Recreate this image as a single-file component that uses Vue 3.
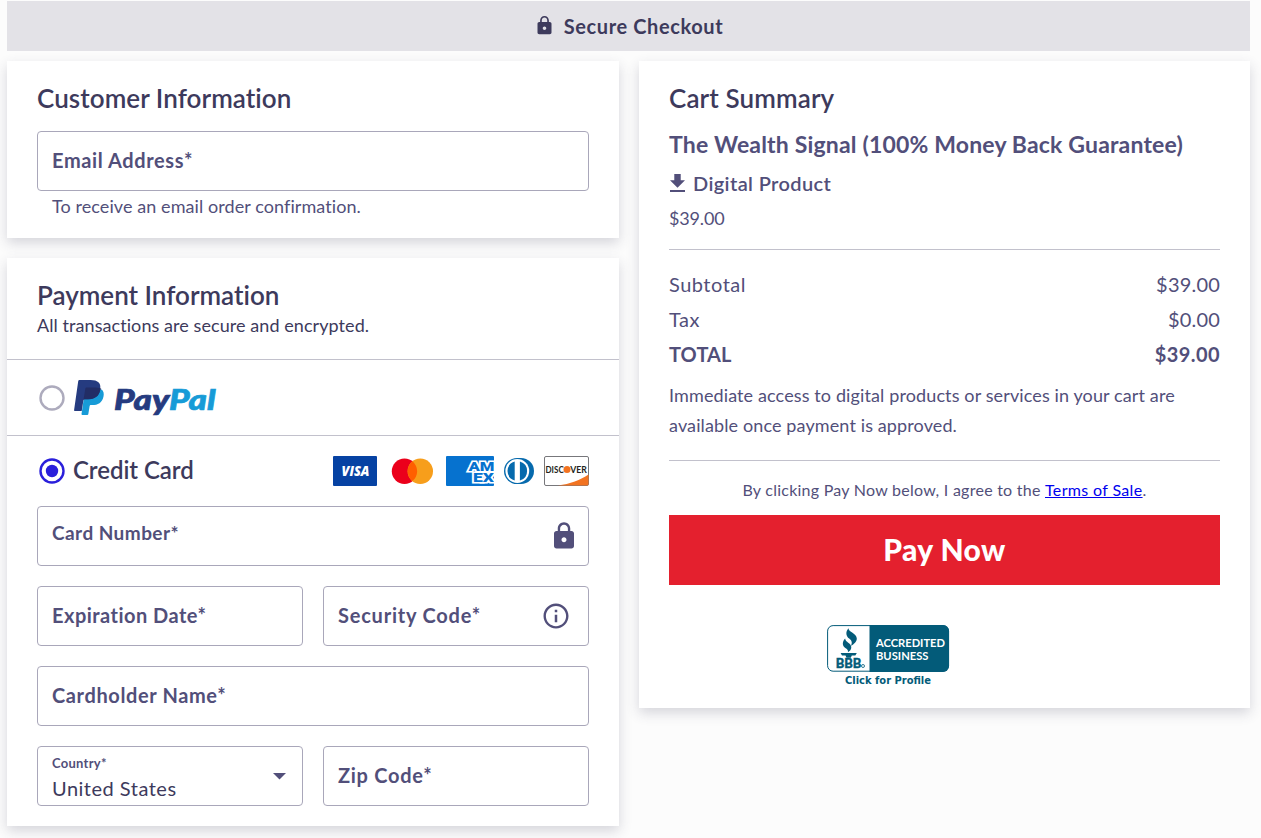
<script setup>
const totals = [
  { label: 'Subtotal', value: '$39.00' },
  { label: 'Tax', value: '$0.00' },
  { label: 'TOTAL', value: '$39.00', strong: true },
]
const lockPath = 'M18 8h-1V6c0-2.76-2.24-5-5-5S7 3.24 7 6v2H6c-1.1 0-2 .9-2 2v10c0 1.1.9 2 2 2h12c1.1 0 2-.9 2-2V10c0-1.1-.9-2-2-2zm-6 9c-1.1 0-2-.9-2-2s.9-2 2-2 2 .9 2 2-.9 2-2 2zm3.1-9H8.9V6c0-1.71 1.39-3.1 3.1-3.1 1.71 0 3.1 1.39 3.1 3.1v2z'
</script>

<template>
  <div class="page">
    <header class="banner">
      <svg class="banner-lock" viewBox="0 0 24 24"><path :d="lockPath" fill="currentColor" /></svg>
      <span>Secure Checkout</span>
    </header>

    <main class="columns">
      <div class="column">
        <section class="card customer">
          <h2 class="title t-customer">Customer Information</h2>
          <div class="field"><label class="t-email">Email Address*</label></div>
          <p class="hint">To receive an email order confirmation.</p>
        </section>

        <section class="card">
          <div class="pay-head">
            <h2 class="title t-payment">Payment Information</h2>
            <p class="sub">All transactions are secure and encrypted.</p>
          </div>

          <div class="method paypal">
            <svg class="radio" width="26" height="26" viewBox="0 0 26 26"><circle cx="13" cy="13" r="11.500" fill="none" stroke="#adabbd" stroke-width="2.400" /></svg>
            <svg class="paypal-logo" width="144" height="38" viewBox="0 0 144 38">
              <path fill="#179bd7" d="M27.8 10.5c1.8 1.7 2.3 4 1.7 7-1.3 6.3-5.6 8.6-11.3 8.6h-1.3c-.7 0-1.2.5-1.3 1.1L14.3 35.200c-.1.5-.5.8-1 .8H8.200c-.5 0-.8-.4-.7-.9L10.800 13z" />
              <path fill="#253b80" d="M26.2 9.900c.4-2.700 0-4.600-1.500-6.300C23.100 1.700 20.100 1 16.400 1H5.700c-.8 0-1.400.5-1.500 1.300L.1 31.100c-.1.600.3 1 .9 1h6.700l1.700-10.600c.1-.8.8-1.300 1.500-1.300h3.100c6.200 0 11-2.500 12.200-10.300z" />
              <path fill="#222d65" d="M27.300 9.700c-2.200-1-5-1.100-8.300-1.100h-6.300c-.8 0-1.300.4-1.400 1.100L9.400 21.500c.1-.8.8-1.300 1.500-1.300H14c6.200 0 11-2.500 12.200-8.900z" />
              <text class="paypal-word" x="40" y="30.500" textLength="101.500" lengthAdjust="spacingAndGlyphs"><tspan fill="#253b80" stroke="#253b80">Pay</tspan><tspan fill="#179bd7" stroke="#179bd7">Pal</tspan></text>
            </svg>
          </div>

          <div class="method credit">
            <svg class="radio" width="26" height="26" viewBox="0 0 26 26">
              <circle cx="13" cy="13" r="11.500" fill="none" stroke="#2a1fdb" stroke-width="2.400" />
              <circle cx="13" cy="13" r="6.200" fill="#2a1fdb" />
            </svg>
            <span class="credit-label">Credit Card</span>
            <div class="brands">
              <svg width="44" height="30" viewBox="0 0 44 30">
                <rect width="44" height="30" rx="1" fill="#0642a3" />
                <text class="visa" x="8.500" y="19.700" textLength="28" lengthAdjust="spacingAndGlyphs">VISA</text>
              </svg>
              <svg width="49" height="30" viewBox="0 0 49 30">
                <circle cx="17.500" cy="15.200" r="12.700" fill="#eb001b" />
                <circle cx="33.300" cy="15.200" r="12.700" fill="#f79e1b" />
                <path d="M25.400 5.300a12.700 12.700 0 0 1 0 19.800a12.700 12.700 0 0 1 0-19.800z" fill="#ff5f00" />
              </svg>
              <svg width="48" height="30" viewBox="0 0 48 30">
                <rect width="48" height="30" rx="1" fill="#0672cf" />
                <text class="amex" x="22.500" y="14.600" textLength="26" lengthAdjust="spacingAndGlyphs">AM</text>
                <text class="amex" x="27" y="26.300" textLength="21" lengthAdjust="spacingAndGlyphs">EX</text>
              </svg>
              <svg width="30" height="30" viewBox="0 0 30 30">
                <path d="M13 2h4a13 13 0 0 1 0 26h-4a13 13 0 0 1 0-26z" fill="#066aad" />
                <circle cx="13.300" cy="15" r="11.900" fill="#fff" />
                <path d="M10.700 5.400a10 10 0 0 0 0 19.200zM15.900 5.400a10 10 0 0 1 0 19.200z" fill="#066aad" />
              </svg>
              <svg width="45" height="30" viewBox="0 0 45 30">
                <rect x=".5" y=".5" width="44" height="29" rx="1.500" fill="#fff" stroke="#77777b" />
                <path d="M44.500 18.500v9.500a1.500 1.500 0 0 1-1.500 1.500H14c12-1.500 22.500-5.500 30.500-11z" fill="#f27321" />
                <text class="discover" x="1.500" y="16.900" textLength="18.200" lengthAdjust="spacingAndGlyphs">DISC</text>
                <circle cx="23" cy="13.500" r="3.500" fill="#f27321" />
                <text class="discover" x="26.200" y="16.900" textLength="16.600" lengthAdjust="spacingAndGlyphs">VER</text>
              </svg>
            </div>
          </div>

          <div class="form">
            <div class="field wide number">
              <label class="t-number">Card Number*</label>
              <svg class="field-icon" viewBox="0 0 24 24"><path :d="lockPath" fill="currentColor" /></svg>
            </div>
            <div class="field"><label class="t-exp">Expiration Date*</label></div>
            <div class="field cvv">
              <label class="t-code">Security Code*</label>
              <svg class="field-icon" viewBox="0 0 24 24"><path fill="currentColor" d="M11 17h2v-6h-2v6zm1-15C6.480 2 2 6.480 2 12s4.480 10 10 10 10-4.480 10-10S17.520 2 12 2zm0 18.100c-4.470 0-8.100-3.630-8.100-8.100S7.530 3.900 12 3.900s8.100 3.630 8.100 8.100-3.630 8.100-8.100 8.100zM11 9h2V7h-2v2z" /></svg>
            </div>
            <div class="field wide"><label class="t-name">Cardholder Name*</label></div>
            <div class="field select">
              <div>
                <small>Country*</small>
                <span>United States</span>
              </div>
              <svg class="caret" width="13" height="7" viewBox="0 0 13 7"><path d="M0 0h13L6.500 6.500z" fill="currentColor" /></svg>
            </div>
            <div class="field"><label class="t-zip">Zip Code*</label></div>
          </div>
        </section>
      </div>

      <section class="card cart">
        <h2 class="title t-cart">Cart Summary</h2>
        <h3 class="product">The Wealth Signal (100% Money Back Guarantee)</h3>
        <div class="digital">
          <svg width="15" height="18" viewBox="5 3 14 17" preserveAspectRatio="none"><path d="M19 9h-4V3H9v6H5l7 7 7-7zM5 18v2h14v-2H5z" fill="currentColor" /></svg>
          <span>Digital Product</span>
        </div>
        <div class="price">$39.00</div>
        <div class="totals">
          <div v-for="row in totals" :key="row.label" class="total-row" :class="{ strong: row.strong }">
            <span>{{ row.label }}</span><span class="amount">{{ row.value }}</span>
          </div>
        </div>
        <p class="note">Immediate access to digital products or services in your cart are available once payment is approved.</p>
        <p class="terms">By clicking Pay Now below, I agree to the <a href="#">Terms of Sale</a>.</p>
        <button class="pay" type="button">Pay Now</button>
        <svg class="bbb" width="124" height="64" viewBox="0 0 124 64">
          <rect x=".600" y=".600" width="121" height="45.600" rx="5.500" fill="#fff" stroke="#035b79" stroke-width="1" />
          <path d="M42.500 0H116a6 6 0 0 1 6 6v35a6 6 0 0 1-6 6H42.500z" fill="#035b79" />
          <path fill="#035b79" d="M21.500 3.200c-.3 3.600 8.300 5.100 8.300 10.200 0 3.400-2.700 5.500-5.800 7.400 1.700-3.500.4-5.500-1.800-7.200-3.200-2.400-4-6.700-.7-10.400zM18.100 13.500c.3 3.800 6 4.600 6.200 8.600.1 2.600-1.500 4.100-3.400 5.200.5-2-.5-2.900-2.200-4-3.800-2.400-3.600-6.500-.6-9.800zM13.600 28h16.200l-1.500 2.400h-3.500l-1 2.300h-4.300l-1-2.300h-3.500z" />
          <text class="bbb-name" x="8.800" y="42.600" textLength="25.500" lengthAdjust="spacingAndGlyphs">BBB</text>
          <circle cx="36" cy="41" r="1.500" fill="none" stroke="#035b79" stroke-width=".800" />
          <text class="bbb-tag" x="49" y="22.300" textLength="69" lengthAdjust="spacingAndGlyphs">ACCREDITED</text>
          <text class="bbb-tag" x="49" y="34.900" textLength="52.500" lengthAdjust="spacingAndGlyphs">BUSINESS</text>
          <text class="bbb-link" x="18" y="59.300" textLength="86" lengthAdjust="spacingAndGlyphs">Click for Profile</text>
        </svg>
      </section>
    </main>
  </div>
</template>

<style>
body { margin: 0; background: #fcfcfc; overflow: hidden; }
</style>

<style scoped>
.page {
  box-sizing: border-box;
  height: 838px;
  padding: 1px 11px 0 7px;
  overflow: hidden;
  font-family: Lato, "Open Sans", sans-serif;
  font-variant-ligatures: none;
  color: #524f7a;
}
h2, h3, p { margin: 0; }
svg { display: block; flex: none; }

.banner {
  height: 50px;
  display: flex;
  align-items: center;
  justify-content: center;
  gap: 9px;
  background: #e3e2e7;
  color: #3d3a5c;
  font-size: 20px;
  font-weight: 700;
  letter-spacing: .6px;
}
.banner-lock { width: 21px; height: 21px; margin-bottom: 1px; }

.columns { display: flex; gap: 20px; align-items: flex-start; margin-top: 10px; }
.column { width: 612px; display: flex; flex-direction: column; gap: 20px; flex: none; }
.card {
  box-sizing: border-box;
  background: #fff;
  box-shadow: 0 5px 12px rgba(61, 58, 92, .2);
}
.customer { height: 177px; padding: 21px 30px 0; }
.title {
  font-size: 26px;
  line-height: 32px;
  font-weight: 600;
  color: #3d3a5c;
}
.t-customer { letter-spacing: .07px; }
.t-payment { letter-spacing: 0; }
.t-cart { letter-spacing: .12px; }

.field {
  box-sizing: border-box;
  height: 60px;
  border: 1px solid #a9a7ba;
  border-radius: 4px;
  padding: 0 14px 3px;
  display: flex;
  align-items: center;
  justify-content: space-between;
}
.field label { font-size: 20px; font-weight: 700; white-space: nowrap; }
.customer .field { margin-top: 17px; }
.t-email { letter-spacing: .6px; }
.field .t-number { font-size: 19px; letter-spacing: .45px; padding-bottom: 8px; }
.t-exp { letter-spacing: .47px; }
.t-code { letter-spacing: .78px; }
.t-name { letter-spacing: .62px; }
.t-zip { letter-spacing: .72px; }
.hint {
  margin: 3px 0 0 15px;
  font-size: 18px;
  line-height: 24px;
  letter-spacing: .08px;
}

.pay-head { height: 101px; box-sizing: border-box; padding: 21px 30px 0; }
.sub { margin-top: 2px; font-size: 18px; line-height: 24px; color: #3d3a5c; letter-spacing: .07px; }
.method {
  display: flex;
  align-items: center;
  border-top: 1px solid #c2c1cc;
  padding: 0 30px 0 32px;
}
.paypal { height: 75px; }
.credit { height: 70px; }
.paypal-logo { margin-left: 9px; }
.paypal-word { font: italic 900 29px Lato, sans-serif; stroke-width: .700px; }
.credit-label {
  margin-left: 8px;
  padding-bottom: 3px;
  font-size: 24px;
  font-weight: 600;
  letter-spacing: -.05px;
  color: #3d3a5c;
}
.brands { display: flex; gap: 10px; margin-left: auto; }
.visa { font: italic 800 13.500px "Open Sans", sans-serif; fill: #fff; }
.amex { font: 900 13px Roboto, sans-serif; fill: #0672cf; stroke: #fff; stroke-width: 3px; paint-order: stroke; }
.discover { font: 700 9.500px Lato, sans-serif; fill: #231f20; }

.form {
  display: grid;
  grid-template-columns: 266px 266px;
  gap: 20px;
  padding: 0 30px 20px;
}
.wide { grid-column: span 2; }
.field-icon { width: 30px; height: 30px; }
.number { padding: 0 9px 0 14px; }
.cvv { padding-right: 17px; }
.cvv .field-icon { margin-top: 3px; }
.select { padding: 2px 16px 0 14px; }
.select small {
  display: block;
  padding-top: 1px;
  font-size: 13px;
  line-height: 16px;
  font-weight: 700;
  letter-spacing: .28px;
}
.select span {
  display: block;
  margin-top: 5px;
  font-size: 20px;
  line-height: 24px;
  letter-spacing: .5px;
  color: #3d3a5c;
}
.caret { margin-bottom: 2px; }

.cart { width: 611px; height: 647px; padding: 21px 30px 0; }
.product {
  margin-top: 16px;
  font-size: 23px;
  line-height: 28px;
  font-weight: 700;
  letter-spacing: .17px;
  white-space: nowrap;
}
.digital {
  display: flex;
  align-items: center;
  gap: 8px;
  height: 24px;
  margin: 13px 0 0 1px;
  font-size: 20px;
  font-weight: 600;
  line-height: 24px;
  letter-spacing: .38px;
}
.price { margin-top: 11px; font-size: 18px; line-height: 24px; letter-spacing: -.15px; }
.totals { margin-top: 19px; border-top: 1px solid #c2c1cc; padding-top: 17px; }
.total-row {
  display: flex;
  justify-content: space-between;
  font-size: 20px;
  line-height: 35px;
  letter-spacing: .5px;
}
.total-row .amount { letter-spacing: .2px; }
.total-row.strong { font-weight: 700; letter-spacing: .1px; }
.total-row.strong .amount { letter-spacing: .4px; }
.note { margin-top: 8px; font-size: 18px; line-height: 30px; letter-spacing: .12px; }
.terms {
  margin-top: 20px;
  border-top: 1px solid #c2c1cc;
  padding-top: 17px;
  font-size: 16px;
  line-height: 24px;
  letter-spacing: .25px;
  text-align: center;
}
.terms a { color: #0000ee; letter-spacing: .35px; }
.pay {
  display: block;
  width: 100%;
  height: 70px;
  margin-top: 13px;
  border: 0;
  padding: 0 0 2px;
  background: #e4202e;
  color: #fff;
  font: 900 30px Lato, sans-serif;
  letter-spacing: .4px;
}
.bbb { margin: 40px 0 0 158px; }
.bbb-name { font: 900 13.500px Lato, sans-serif; fill: #035b79; stroke: #035b79; stroke-width: .400px; }
.bbb-tag { font: 700 11.500px Lato, sans-serif; fill: #fff; }
.bbb-link { font: 700 11px "DejaVu Sans", sans-serif; fill: #035b79; }
</style>
